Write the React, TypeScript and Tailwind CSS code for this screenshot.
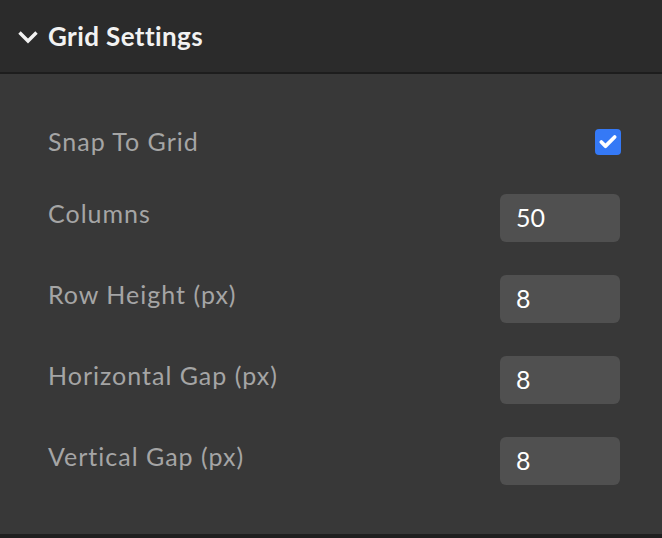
import { Check } from 'lucide-react'

const fields = [
  { label: 'Columns', value: '50' },
  { label: 'Row Height (px)', value: '8' },
  { label: 'Horizontal Gap (px)', value: '8' },
  { label: 'Vertical Gap (px)', value: '8' },
]

export default function App() {
  return (
    <div className="w-[662px] h-[538px] bg-[#383838] font-['Lato',sans-serif] overflow-hidden flex flex-col">
      {/* header */}
      <div className="h-[74px] shrink-0 bg-[#2b2b2b] border-b-2 border-[#1d1d1d] flex items-center pl-[17px] gap-[9px]">
        <svg width="22" height="14" viewBox="0 0 22 14" className="mt-[2px]">
          <polyline points="2.5,2.5 11,11 19.5,2.5" fill="none" stroke="#f2f2f2" strokeWidth="3.4" strokeLinecap="butt" strokeLinejoin="miter" />
        </svg>
        <span className="text-[26px] font-bold text-[#f2f2f2] tracking-[0.4px]">Grid Settings</span>
      </div>

      {/* body */}
      <div className="flex-1 pt-[44px] pl-[48px] pr-[41px] border-b-4 border-[#1f1f1f]">
        <div className="h-[48px] flex items-center justify-between">
          <span className="text-[25px] text-[#a5a5a5] tracking-[1px]">Snap To Grid</span>
          <div className="w-[26px] h-[26px] rounded-[4px] bg-[#3579f6] flex items-center justify-center">
            <Check size={20} strokeWidth={4.5} className="text-white" />
          </div>
        </div>
        <div className="mt-[28px] flex flex-col gap-[33px]">
          {fields.map(f => (
            <div key={f.label} className="h-[48px] flex items-center justify-between">
              <span className="text-[25px] text-[#a5a5a5] tracking-[1px] -mt-[8px]">{f.label}</span>
              <div className="w-[120px] h-[48px] rounded-[6px] bg-[#505050] flex items-center pl-[16px] mr-[1px]">
                <span className="text-[25px] text-white">{f.value}</span>
              </div>
            </div>
          ))}
        </div>
      </div>
    </div>
  )
}
